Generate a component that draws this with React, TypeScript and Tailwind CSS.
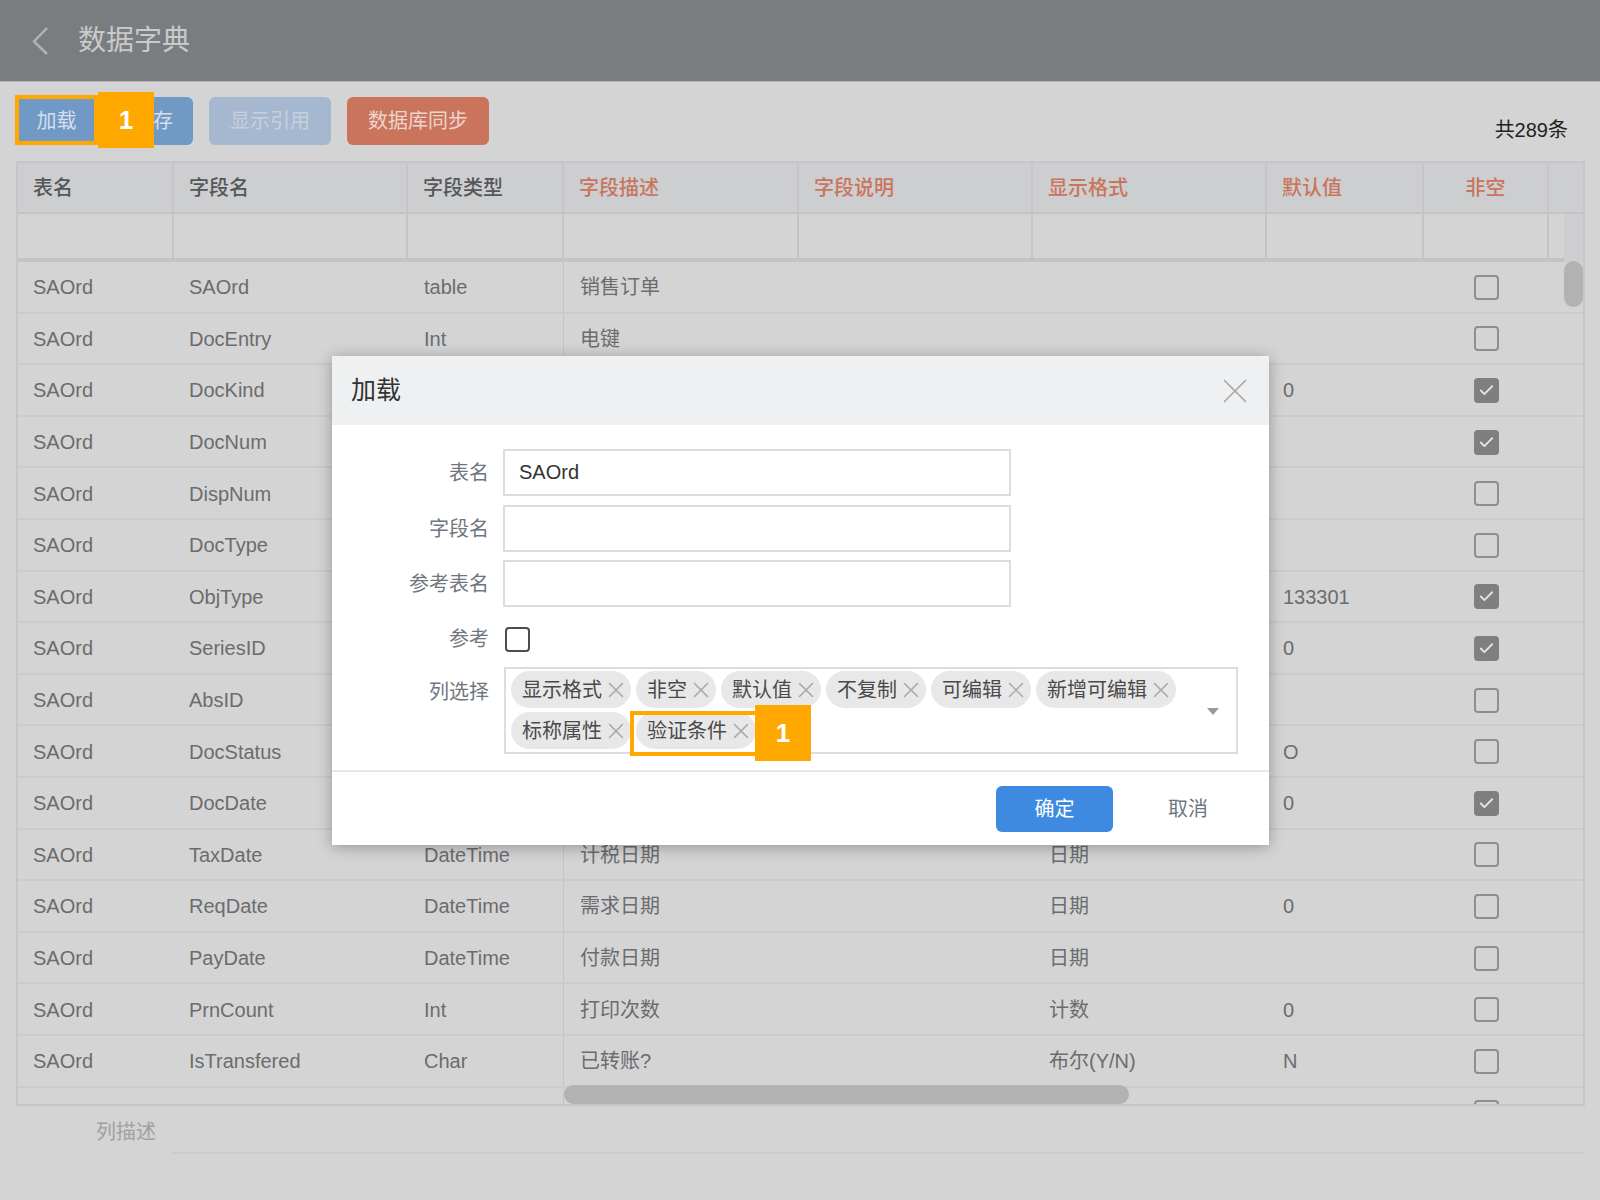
import { Check, X } from "lucide-react";

const rows = [
  ["SAOrd", "table", "销售订单", "", "", false],
  ["DocEntry", "Int", "电键", "", "", false],
  ["DocKind", "Char", "单据类型", "", "0", true],
  ["DocNum", "Int", "单据号", "", "", true],
  ["DispNum", "NVarChar", "显示编号", "", "", false],
  ["DocType", "Char", "业务类型", "", "", false],
  ["ObjType", "NVarChar", "对象类型", "", "133301", true],
  ["SeriesID", "Int", "序列", "", "0", true],
  ["AbsID", "Int", "内部编号", "", "", false],
  ["DocStatus", "Char", "单据状态", "", "O", false],
  ["DocDate", "DateTime", "单据日期", "日期", "0", true],
  ["TaxDate", "DateTime", "计税日期", "日期", "", false],
  ["ReqDate", "DateTime", "需求日期", "日期", "0", false],
  ["PayDate", "DateTime", "付款日期", "日期", "", false],
  ["PrnCount", "Int", "打印次数", "计数", "0", false],
  ["IsTransfered", "Char", "已转账?", "布尔(Y/N)", "N", false],
  ["Printed", "Char", "已打印", "布尔", "", false],
] as const;

const gridCols = "grid grid-cols-[156px_234px_156px_235px_234px_234px_157px_125px_1fr]";

const headers = [
  { label: "表名" },
  { label: "字段名" },
  { label: "字段类型" },
  { label: "字段描述", accent: true },
  { label: "字段说明", accent: true },
  { label: "显示格式", accent: true },
  { label: "默认值", accent: true },
  { label: "非空", accent: true, center: true },
];

const chips = ["显示格式", "非空", "默认值", "不复制", "可编辑", "新增可编辑", "标称属性"];

function RowCheck({ on }: { on: boolean }) {
  if (on) {
    return (
      <span className="flex h-[25px] w-[25px] items-center justify-center rounded-[4px] bg-[#7f7f7f] text-[#e6e6e6]">
        <Check size={17} strokeWidth={2.5} />
      </span>
    );
  }
  return <span className="block h-[25px] w-[25px] rounded-[4px] border-2 border-[#8f8f8f]" />;
}

function Chip({ label }: { label: string }) {
  return (
    <span className="flex h-[37px] items-center rounded-full bg-[#e8e8e8] pl-[11px] pr-[2px] text-[20px] text-[#4a4a4a]">
      {label}
      <X size={26} strokeWidth={1.4} className="ml-[1px] text-[#a8a8a8]" />
    </span>
  );
}

function Badge({ className }: { className: string }) {
  return (
    <span className={`absolute flex items-center justify-center bg-[#ffa800] text-[26px] font-bold text-white ${className}`}>
      1
    </span>
  );
}

function Field({ label, value }: { label: string; value?: string }) {
  return (
    <div className="flex items-center">
      <label className="w-[157px] text-right text-[20px] text-[#6f7680]">{label}</label>
      <input
        readOnly
        value={value ?? ""}
        className="ml-[14px] h-[47px] w-[508px] border-2 border-[#dddddd] bg-white px-[14px] text-[20px] text-[#333333] outline-none"
      />
    </div>
  );
}

function LoadDialog() {
  return (
    <div className="absolute left-[332px] top-[356px] h-[489px] w-[937px] bg-white shadow-[0_2px_14px_rgba(0,0,0,0.3)]">
      <div className="flex h-[69px] items-center justify-between bg-[#eff0f2] pl-[19px] pr-[13px]">
        <span className="text-[25px] text-[#333333]">加载</span>
        <X size={42} strokeWidth={1} className="text-[#a9a9a9]" />
      </div>
      <div className="flex flex-col pt-[24px]">
        <Field label="表名" value="SAOrd" />
        <div className="mt-[9px]">
          <Field label="字段名" />
        </div>
        <div className="mt-[8px]">
          <Field label="参考表名" />
        </div>
        {/* 参考 */}
        <div className="mt-[17px] flex items-center">
          <label className="w-[157px] text-right text-[20px] text-[#6f7680]">参考</label>
          <span className="ml-[16px] block h-[25px] w-[25px] rounded-[4px] border-2 border-[#4d4d4d]" />
        </div>
        {/* 列选择 */}
        <div className="mt-[13px] flex items-start">
          <label className="mt-[10px] w-[157px] text-right text-[20px] text-[#6f7680]">列选择</label>
          <div className="relative ml-[15px] h-[87px] w-[734px] border-2 border-[#dddddd] pl-[5px] pt-[2px]">
            <div className="flex w-[680px] flex-wrap gap-x-[5px] gap-y-[4px]">
              {chips.map((c) => (
                <Chip key={c} label={c} />
              ))}
              <Chip label="验证条件" />
            </div>
            <span className="absolute left-[701px] top-[39px] h-0 w-0 border-x-[6px] border-t-[7px] border-x-transparent border-t-[#9a9a9a]" />
            <span className="absolute left-[124px] top-[42px] h-[45px] w-[130px] border-4 border-[#ffa800]" />
            <Badge className="left-[249px] top-[36px] h-[56px] w-[56px]" />
          </div>
        </div>
      </div>
      <div className="mt-[16px] flex h-[75px] items-start justify-end border-t-2 border-[#e8e8e8] pr-[61px] pt-[14px]">
        <button className="h-[46px] w-[117px] rounded-[6px] bg-[#3e8ae0] text-[20px] text-white">确定</button>
        <button className="ml-[55px] h-[46px] text-[20px] text-[#6f7680]">取消</button>
      </div>
    </div>
  );
}

export default function App() {
  return (
    <div className="relative h-[1200px] overflow-hidden bg-[#d4d4d4] font-['Liberation_Sans','Noto_Sans_CJK_SC',sans-serif]">
      {/* Title bar */}
      <div className="flex h-[82px] items-center border-b border-[#b4b5b6] bg-[#7a7d80] pl-[31px]">
        <svg width="18" height="30" viewBox="0 0 18 30" fill="none" className="text-[#b0b2b3]">
          <path d="M16 2 L3 15.5 L16 28" stroke="currentColor" strokeWidth="2.5" />
        </svg>
        <span className="ml-[29px] text-[28px] text-[#c9cacb]">数据字典</span>
      </div>

      {/* Toolbar */}
      <div className="flex h-[79px] items-start justify-between pl-[16px] pr-[32px] pt-[15px]">
        <div className="flex gap-[16px]">
          <div className="relative">
            <button className="h-[48px] w-[81px] rounded-[6px] bg-[#7099c6] text-[20px] text-[#d5dfeb]">加载</button>
            <span className="absolute -left-[1px] -top-[2px] h-[50px] w-[83px] border-4 border-[#ffa800]" />
            <Badge className="left-[82px] -top-[5px] h-[56px] w-[56px]" />
          </div>
          <button className="h-[48px] w-[80px] rounded-[6px] bg-[#7099c6] text-[20px] text-[#d5dfeb]">保存</button>
          <button className="h-[48px] w-[122px] rounded-[6px] bg-[#a5b8d0] text-[20px] text-[#c5d0de]">显示引用</button>
          <button className="h-[48px] w-[142px] rounded-[6px] bg-[#cb745c] text-[20px] text-[#ecd5cd]">数据库同步</button>
        </div>
        <span className="mt-[18px] text-[20px] text-[#222222]">共289条</span>
      </div>

      {/* Table */}
      <div className="relative ml-[16px] mr-[15px] h-[945px] overflow-hidden border-2 border-[#c6c6c8]">
        <div className={`${gridCols} h-[51px] border-b-2 border-[#c4c4c6] bg-[#cdced0] text-[20px] font-medium`}>
          {headers.map((h) => (
            <div
              key={h.label}
              className={`flex items-center border-r-2 border-[#c6c6c8] px-[15px] ${h.accent ? "text-[#c9755c]" : "text-[#55575a]"} ${h.center ? "justify-center" : ""}`}
            >
              {h.label}
            </div>
          ))}
          <div />
        </div>
        <div className="flex h-[48px]">
          <div className={`${gridCols} flex-1 border-b-4 border-[#c4c4c6]`}>
            {headers.map((h) => (
              <div key={h.label} className="border-r-2 border-[#c4c4c6]" />
            ))}
            <div />
          </div>
          <div className="w-[19px] bg-[#cdced0]" />
        </div>
        {rows.map((r) => (
          <div key={r[0]} className={`${gridCols} h-[51.6px] border-b-2 border-[#cbcbcb] text-[20px] text-[#6b6c6e]`}>
            <div className="flex items-center pl-[15px] pt-[1px]">SAOrd</div>
            <div className="flex items-center pl-[15px] pt-[1px]">{r[0]}</div>
            <div className="flex items-center border-r border-[#c4c4c6] pl-[16px] pt-[1px]">{r[1]}</div>
            <div className="flex items-center pl-[16px] pt-[1px]">{r[2]}</div>
            <div />
            <div className="flex items-center pl-[16px] pt-[1px]">{r[3]}</div>
            <div className="flex items-center pl-[16px] pt-[1px]">{r[4]}</div>
            <div className="flex items-center justify-center pt-[1px]">
              <RowCheck on={r[5]} />
            </div>
            <div />
          </div>
        ))}
        <div className="absolute right-0 top-[98px] h-[46px] w-[19px] rounded-full bg-[#b2b2b2]" />
        <div className="absolute bottom-0 left-[546px] h-[19px] w-[565px] rounded-full bg-[#b2b2b2]" />
      </div>

      {/* 列描述 */}
      <div className="ml-[16px] mr-[15px] flex h-[47px] items-start">
        <span className="mt-[11px] w-[156px] pl-[80px] text-[20px] text-[#a0a0a0]">列描述</span>
        <span className="mt-[46px] block h-[2px] flex-1 bg-[#cbcbcb]" />
      </div>

      <LoadDialog />
    </div>
  );
}
